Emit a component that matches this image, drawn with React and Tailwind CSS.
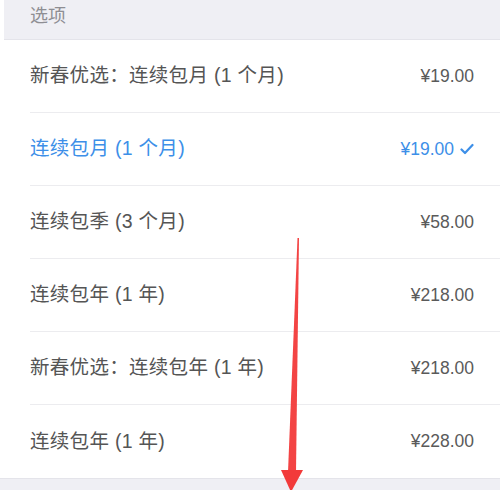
import React from "react";

const rows = [
  { label: "新春优选：连续包月 (1 个月)", price: "¥19.00" },
  { label: "连续包月 (1 个月)", price: "¥19.00", selected: true },
  { label: "连续包季 (3 个月)", price: "¥58.00" },
  { label: "连续包年 (1 年)", price: "¥218.00" },
  { label: "新春优选：连续包年 (1 年)", price: "¥218.00" },
  { label: "连续包年 (1 年)", price: "¥228.00" },
];

export default function App() {
  return (
    <div
      className="relative w-[500px] h-[490px] overflow-hidden bg-white"
      style={{ fontFamily: '"Liberation Sans", "Noto Sans CJK SC", sans-serif' }}
    >
      <div className="ml-[4px] h-[40px] bg-[#efeff4] flex items-center pl-[26px] pb-[6px] text-[18px] text-[#8e8e93] border-b border-[#e4e4ea]">
        选项
      </div>
      <div className="pl-[30px]">
        {rows.map((r, i) => (
          <div
            key={i}
            className={
              "h-[73px] flex items-center justify-between pr-[26px] " +
              (i < rows.length - 1 ? "border-b border-[#ececef]" : "")
            }
          >
            <span
              className={
                "text-[19.5px] tracking-[0.3px] " + (r.selected ? "text-[#3d8fe8]" : "text-[#555555]")
              }
            >
              {r.label}
            </span>
            <span
              className={
                "flex items-center gap-[6px] text-[17.5px] " +
                (r.selected ? "text-[#3d8fe8]" : "text-[#5a5a5a]")
              }
            >
              {r.price}
              {r.selected && (
                <svg width="14" height="12" viewBox="0 0 14 12">
                  <path d="M1.5 6.5 L5 10 L12.5 2" fill="none" stroke="#3d8fe8" strokeWidth="2.2" strokeLinecap="round" strokeLinejoin="round" />
                </svg>
              )}
            </span>
          </div>
        ))}
      </div>
      <div className="h-[20px] bg-[#efeff4] border-t border-[#e4e4ea]" />
      <svg
        className="absolute left-0 top-0 pointer-events-none"
        width="500"
        height="490"
        viewBox="0 0 500 490"
      >
        <polygon points="297.5,238 299,238 296,472 288,472" fill="#f23a3a" opacity="0.95" />
        <polygon points="281,470 303,470 291,492" fill="#f23a3a" />
      </svg>
    </div>
  );
}
